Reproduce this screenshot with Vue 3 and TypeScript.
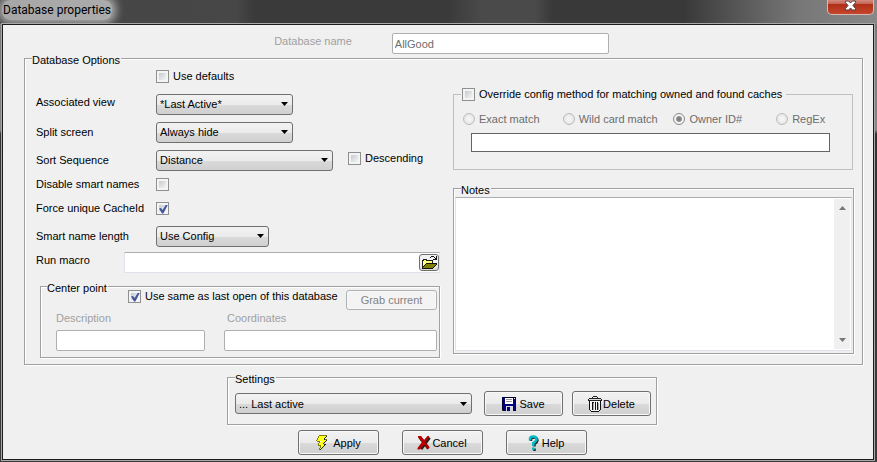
<script setup lang="ts">
import { ref } from 'vue'

const databaseName = ref('AllGood')
const useDefaults = ref(false)
const view = ref('*Last Active*')
const splitScreen = ref('Always hide')
const sortSequence = ref('Distance')
const descending = ref(false)
const disableSmartNames = ref(false)
const forceUnique = ref(true)
const smartLength = ref('Use Config')
const macro = ref('')
const sameAsLast = ref(true)
const description = ref('')
const coordinates = ref('')
const override = ref(false)
const matchMethod = ref('Owner ID#')
const matchMethods: string[] = ['Exact match', 'Wild card match', 'Owner ID#', 'RegEx']
const matchText = ref('')
const notes = ref('')
const settings = ref('... Last active')
</script>

<template>
  <main class="window">
    <header class="titlebar">
      <h1 class="title">Database properties</h1>
      <button class="close" type="button" aria-label="Close">
        <svg width="13" height="11" viewBox="0 0 13 11">
          <path d="M1.500 1h3.200L6.500 3l1.800-2h3.200v1.500L9 5.500l2.500 3V10H8.300L6.500 8 4.700 10H1.500V8.500l2.500-3-2.500-3z" fill="#fff" stroke="#4b4040" stroke-width="1" />
        </svg>
      </button>
    </header>

    <form class="client" @submit.prevent>
      <div class="name-row">
        <label class="dim raised" for="dbname">Database name</label>
        <input id="dbname" v-model="databaseName" class="box name-box" type="text" disabled />
      </div>

      <fieldset class="group options">
        <legend>Database Options</legend>
        <div class="columns">
          <div class="left">
            <div class="row first">
              <span class="caption"></span>
              <label class="check"><input v-model="useDefaults" type="checkbox" />Use defaults</label>
            </div>
            <div class="row">
              <label class="caption raised" for="view">Associated view</label>
              <span class="select medium">
                <select id="view" v-model="view"><option>*Last Active*</option></select>
                <svg width="7" height="4" viewBox="0 0 7 4"><path d="M0 0h7L3.500 4z" /></svg>
              </span>
            </div>
            <div class="row">
              <label class="caption" for="split">Split screen</label>
              <span class="select medium">
                <select id="split" v-model="splitScreen"><option>Always hide</option></select>
                <svg width="7" height="4" viewBox="0 0 7 4"><path d="M0 0h7L3.500 4z" /></svg>
              </span>
            </div>
            <div class="row">
              <label class="caption" for="sort">Sort Sequence</label>
              <span class="select wide">
                <select id="sort" v-model="sortSequence"><option>Distance</option></select>
                <svg width="7" height="4" viewBox="0 0 7 4"><path d="M0 0h7L3.500 4z" /></svg>
              </span>
              <label class="check descending"><input v-model="descending" type="checkbox" />Descending</label>
            </div>
            <div class="row short">
              <label class="caption" for="disable">Disable smart names</label>
              <input id="disable" v-model="disableSmartNames" type="checkbox" />
            </div>
            <div class="row">
              <label class="caption" for="force">Force unique CacheId</label>
              <input id="force" v-model="forceUnique" type="checkbox" />
            </div>
            <div class="row">
              <label class="caption" for="length">Smart name length</label>
              <span class="select small">
                <select id="length" v-model="smartLength"><option>Use Config</option></select>
                <svg width="7" height="4" viewBox="0 0 7 4"><path d="M0 0h7L3.500 4z" /></svg>
              </span>
            </div>
            <div class="row macro">
              <label class="caption raised" for="macro">Run macro</label>
              <div class="macro-box">
                <input id="macro" v-model="macro" type="text" />
                <button class="browse" type="button" aria-label="Browse">
                  <svg width="17" height="15" viewBox="0 0 17 15" shape-rendering="crispEdges">
                    <path d="M1 13V5h1V4h4v1h5v3" fill="#ffff7a" stroke="none" />
                    <path d="M1 13V5h1V4h3v1h6v3" transform="translate(.5 .5)" fill="none" stroke="#222" />
                    <path d="M2 13L6 8h10l-4 5z" fill="#808000" />
                    <path d="M1 13.500h11M12 12.500h1M13 11.500h1M14 10.500h1M15 9.500h1M5 8.500h11M4 9.500h1M3 10.500h1M2 11.500h1" stroke="#111" />
                    <path d="M9 2.500h1M10 1.500h3M13 2.500h1M14 3.500h2M12 4.500h4M15 1v4" stroke="#111" />
                  </svg>
                </button>
              </div>
            </div>

            <fieldset class="group center">
              <legend>Center point</legend>
              <div class="center-top">
                <label class="check"><input v-model="sameAsLast" type="checkbox" />Use same as last open of this database</label>
                <button class="button grab" type="button" disabled>Grab current</button>
              </div>
              <div class="center-fields">
                <label class="dim" for="desc">Description</label>
                <label class="dim coord-label" for="coords">Coordinates</label>
                <input id="desc" v-model="description" class="box" type="text" disabled />
                <input id="coords" v-model="coordinates" class="box" type="text" disabled />
              </div>
            </fieldset>
          </div>

          <div class="right">
            <fieldset class="group override">
              <legend>
                <label class="check"><input v-model="override" type="checkbox" />Override config method for matching owned and found caches</label>
              </legend>
              <div class="radios">
                <label v-for="m in matchMethods" :key="m" class="radio">
                  <input v-model="matchMethod" type="radio" name="method" :value="m" disabled />{{ m }}
                </label>
              </div>
              <input v-model="matchText" class="match" type="text" aria-label="Match value" />
            </fieldset>

            <fieldset class="group notes">
              <legend>Notes</legend>
              <div class="notes-box">
                <textarea v-model="notes" aria-label="Notes"></textarea>
                <div class="scrollbar">
                  <svg width="7" height="4" viewBox="0 0 7 4"><path d="M0 4h7L3.500 0z" /></svg>
                  <svg width="7" height="4" viewBox="0 0 7 4"><path d="M0 0h7L3.500 4z" /></svg>
                </div>
              </div>
            </fieldset>
          </div>
        </div>
      </fieldset>

      <fieldset class="group settings">
        <legend>Settings</legend>
        <div class="settings-row">
          <span class="select saved">
            <select v-model="settings" aria-label="Settings"><option>... Last active</option></select>
            <svg width="7" height="4" viewBox="0 0 7 4"><path d="M0 0h7L3.500 4z" /></svg>
          </span>
          <div class="settings-buttons">
            <button class="button" type="button">
              <svg width="14" height="14" viewBox="0 0 14 14" shape-rendering="crispEdges">
                <path d="M0 0h14v14H1L0 13z" fill="#000080" />
                <path d="M3 1h8v6H3z" fill="#fff" />
                <path d="M4 2.500h6M4 4.500h6" stroke="#999" />
                <path d="M4 9h7v5H4z" fill="#d8d8d8" />
                <path d="M5 10h3v4H5z" fill="#000080" />
                <path d="M12 1h1v1h-1z" fill="#fff" />
                <path d="M0 .5h14M0 13.500h4M11 13.500h3M13.500 2v12M.5 0v14" stroke="#000" stroke-opacity=".6" />
              </svg>
              Save
            </button>
            <button class="button tight" type="button">
              <svg width="14" height="16" viewBox="0 0 14 16" shape-rendering="crispEdges">
                <path d="M5 .5h4M4.500 1v1M9.500 1v1M1 2.500h12M0 4.500h14M.5 3v1M13.500 3v1" fill="none" stroke="#222" />
                <path d="M1 3h12v1H1z" fill="#ddd" />
                <path d="M2 5h10v10H2z" fill="#f4f4f4" />
                <path d="M1.500 5v9M12.500 5v9M2 14.500h1M11 14.500h1M3 15.500h8M4.500 7v7M7.500 7v7M9.500 7v7M4 6.500h2M7 6.500h1M9 6.500h1" stroke="#111" />
                <path d="M5.500 7v7M10.500 7v7" stroke="#aaa" />
              </svg>
              Delete
            </button>
          </div>
        </div>
      </fieldset>

      <div class="actions">
        <button class="button" type="submit">
          <svg width="15" height="16" viewBox="0 0 15 16" shape-rendering="crispEdges">
            <path d="M4 1h8l-3 4h3L8 9h2l-6 6 2-5H3l3-4H2z" fill="#ffff20" />
            <path d="M4 .5h8M3.500 1v2M2.500 3v2M1.500 5v1M2 6.500h3M4.500 7v1M3.500 8v2M3 10.500h3M5.500 11v2M4.500 13v2M10 4.500h2" fill="none" stroke="#808000" />
            <path d="M11.500 1v1M10.500 2v1M9.500 3v2M11.500 5v1M10.500 6v1M9.500 7v1M8.500 8v1M9 9.500h2M9.500 10v1M8.500 11v1M7.500 12v1M6.500 13v1M5.500 14v1" fill="none" stroke="#222" />
          </svg>
          Apply
        </button>
        <button class="button tight" type="button">
          <svg width="14" height="15" viewBox="0 0 14 15">
            <path d="M3 2.500l8.500 11M12.500 2.500L4 14" stroke="#222" stroke-width="3" fill="none" />
            <path d="M1 1h3l3 4 3.500-4H12v1.500L8.500 7l3.500 4.500v2h-2L7 9.500l-4 5H.5V13l4.500-6-4-4.500z" fill="#b80000" />
          </svg>
          Cancel
        </button>
        <button class="button" type="button">
          <svg width="11" height="16" viewBox="0 0 11 16">
            <path d="M3 6V4.500Q3 2.500 6 2.500t3.500 3q0 1.500-3 3.500v2.500M6.500 13.500V16" stroke="#222" stroke-width="2.500" fill="none" />
            <path d="M2 5.500V4q0-2.500 3.250-2.500T8.500 4.500Q8.500 6 5.250 8v3M5.250 12.500V15" stroke="#00bcc6" stroke-width="2.500" fill="none" />
          </svg>
          Help
        </button>
      </div>
    </form>
  </main>
</template>

<style>
body {
  margin: 0;
  background: #333;
}
</style>

<style scoped>
.window {
  box-sizing: border-box;
  display: flex;
  flex-direction: column;
  min-height: 100vh;
  padding: 0 3px 2px 2px;
  background:
    linear-gradient(90deg, #3c3c3c 0%, #464646 12%, #474747 27%, #3a3a3a 29%, #3a3a3a 51%, #4a4a4a 55%, #4a4a4a 61%, #393939 63%, #393939 78%, #777 91%, #888 100%) top / 100% 24px no-repeat,
    linear-gradient(#777 0, #858585 130px, #333 134px, #3c3c3c 100%);
  font-family: "Liberation Sans", Arial, sans-serif;
  font-size: 11px;
  line-height: 16px;
  color: #000;
}

.titlebar {
  display: flex;
  justify-content: space-between;
  align-items: flex-start;
  height: 24px;
}

.title {
  margin: 0;
  padding: 2px 1px;
  border-radius: 8px;
  background: rgb(255 255 255 / 55%);
  box-shadow: 0 0 8px 4px rgb(255 255 255 / 55%);
  font: 12px/16px Roboto, "Open Sans", sans-serif;
}

.close {
  display: flex;
  justify-content: center;
  width: 47px;
  height: 15px;
  padding: 0;
  border: 1px solid #d8b8b4;
  border-top: 0;
  border-radius: 0 0 5px 5px;
  background: linear-gradient(#d58c80 0, #c2604f 30%, #b02f18 32%, #c6452c 100%);
}

.client {
  flex: 1;
  display: flex;
  flex-direction: column;
  align-items: center;
  padding: 8px 10px 4px 21px;
  border: 1px solid #1c1c1c;
  background: #f0f0f0;
  box-shadow: 0 0 0 1px #a8a8a8;
}

input,
select,
textarea,
button {
  box-sizing: border-box;
  margin: 0;
  font: inherit;
  color: inherit;
}

.name-row {
  display: flex;
  align-items: center;
  gap: 40px;
  margin-right: 4px;
}

.dim {
  color: #a0a0a0;
}

.raised {
  padding-bottom: 5px;
}

.box {
  width: 100%;
  height: 21px;
  padding: 0 2px;
  border: 1px solid #afafaf;
  border-radius: 2px;
  background: #fff;
  color: #6d6d6d;
}

.name-box {
  width: 217px;
}

.group {
  box-sizing: border-box;
  min-width: 0;
  margin: 0;
  padding: 0;
  border: 1px solid #a0a0a0;
  box-shadow: inset 1px 1px #fff, 1px 1px #fff;
}

.group > legend {
  margin-left: 7px;
  padding: 4px 1px 0 0;
  background: #f0f0f0;
  line-height: 12px;
}

.options {
  align-self: stretch;
  margin-top: -4px;
  padding: 0 8px 6px 0;
}

.columns {
  display: grid;
  grid-template-columns: minmax(0, 415fr) minmax(0, 401fr);
  gap: 13px;
}

.left {
  padding-left: 11px;
}

.row {
  display: flex;
  align-items: center;
  height: 28px;
}

.row.first {
  box-sizing: border-box;
  height: 24px;
  padding-bottom: 4px;
}

.row.short {
  height: 20px;
}

.row.macro {
  height: 24px;
}

.caption {
  flex: none;
  width: 120px;
  white-space: nowrap;
}

.macro .caption {
  width: 88px;
}

.check,
.radio {
  display: flex;
  align-items: center;
  gap: 4px;
  white-space: nowrap;
}

input[type="checkbox"] {
  flex: none;
  display: grid;
  place-items: center;
  width: 13px;
  height: 13px;
  appearance: none;
  border: 1px solid #8e8f8f;
  background: linear-gradient(135deg, #c6cad0, #f4f4f4) content-box, #f4f4f4;
  padding: 2px;
}

input[type="checkbox"]:checked::before {
  content: "";
  width: 9px;
  height: 9px;
  background: #3f559c;
  clip-path: polygon(0 45%, 22% 38%, 40% 62%, 78% 0, 100% 0, 48% 100%, 34% 100%);
}

.select {
  display: grid;
  align-items: center;
}

.select > * {
  grid-area: 1 / 1;
}

.select svg {
  justify-self: end;
  margin-right: 5px;
  pointer-events: none;
}

select {
  width: 100%;
  height: 21px;
  padding: 0 16px 0 3px;
  appearance: none;
  border: 1px solid #707070;
  border-radius: 3px;
  background: linear-gradient(#f2f2f2 0, #ebebeb 50%, #dadada 52%, #cfcfcf 100%);
}

.medium {
  width: 137px;
}

.wide {
  width: 177px;
}

.small {
  width: 113px;
}

.saved {
  width: 237px;
}

.descending {
  margin-left: 15px;
  padding-bottom: 4px;
}

.macro-box {
  flex: 1;
  display: flex;
  align-items: center;
  box-sizing: border-box;
  height: 21px;
  border: 1px solid #e2e3ea;
  border-top-color: #abadb3;
  background: #fff;
}

.macro-box input {
  flex: 1;
  min-width: 0;
  height: 19px;
  padding: 0 2px;
  border: 0;
  background: none;
}

.browse {
  display: grid;
  place-items: center;
  width: 20px;
  height: 17px;
  padding: 0;
  border: 1px solid #707070;
  border-radius: 3px;
  background: linear-gradient(#f2f2f2 50%, #dadada);
}

.center {
  margin: 4px 0 0 4px;
  padding: 0 2px 6px 15px;
}

.center > legend {
  margin-left: -9px;
}

.center-top {
  display: flex;
  justify-content: space-between;
  align-items: flex-start;
  height: 22px;
  margin-top: -6px;
  padding-left: 72px;
}

.center-fields {
  display: grid;
  grid-template-columns: minmax(0, 149fr) minmax(0, 213fr);
  column-gap: 19px;
  row-gap: 4px;
}

.coord-label {
  padding-left: 3px;
}

.button {
  display: flex;
  align-items: center;
  justify-content: center;
  gap: 3px;
  width: 81px;
  height: 25px;
  padding: 0;
  border: 1px solid #707070;
  border-radius: 3px;
  background: linear-gradient(#f2f2f2 0, #ebebeb 50%, #dadada 52%, #cfcfcf 100%);
  box-shadow: inset 0 0 0 1px #f8f8f8;
  white-space: nowrap;
}

.button.tight {
  gap: 1px;
}

.grab {
  width: 91px;
  height: 20px;
  margin-top: 2px;
  border-color: #adb2b5;
  background: #f4f4f4;
  color: #838383;
}

.right {
  display: flex;
  flex-direction: column;
  gap: 10px;
  padding-top: 20px;
}

.override {
  margin-right: 1px;
  border-color: #c0c0c0;
  box-shadow: none;
  padding: 9px 22px 17px 9px;
}

.override > legend {
  margin-left: -2px;
  padding: 0 4px 0 1px;
  line-height: 16px;
}

.radios {
  display: grid;
  grid-template-columns: 100fr 111fr 103fr 54fr;
  color: #6d6d6d;
}

input[type="radio"] {
  width: 12px;
  height: 12px;
  appearance: none;
  border: 1px solid #bcbcbc;
  border-radius: 50%;
  background: radial-gradient(#f4f4f4 20%, #dedede);
}

input[type="radio"]:checked {
  border-color: #8a8a8a;
  background: radial-gradient(#777 0, #909090 35%, #f2f2f2 50%);
}

.match {
  display: block;
  width: calc(100% - 8px);
  height: 19px;
  margin: 6px 0 0 8px;
  padding: 0 3px;
  border: 1px solid #646464;
  background: #fff;
}

.notes {
  flex: 1;
  display: flex;
  flex-direction: column;
  padding: 1px 1px 0;
  margin-bottom: 4px;
}

.notes > legend {
  margin-left: 6px;
}

.notes-box {
  display: flex;
  box-sizing: border-box;
  height: 154px;
  border: 1px solid #e2e3ea;
  border-top-color: #abadb3;
  background: #fff;
}

textarea {
  flex: 1;
  min-width: 0;
  padding: 2px;
  border: 0;
  background: none;
  resize: none;
}

.scrollbar {
  display: flex;
  flex-direction: column;
  justify-content: space-between;
  align-items: center;
  box-sizing: border-box;
  width: 16px;
  margin: 1px;
  padding: 7px 0;
  background: #f0f0f0;
}

.scrollbar path {
  fill: #777;
}

.settings {
  margin: 4px 3px 0 0;
  padding: 6px 5px 8px 7px;
}

.settings > legend {
  margin-left: 0;
}

.settings-row {
  display: flex;
  align-items: center;
  gap: 12px;
}

.settings-buttons {
  display: flex;
  gap: 9px;
}

.settings-buttons .button {
  width: 79px;
}

.actions {
  display: flex;
  gap: 23px;
  margin: 5px 3px 0 0;
}
</style>
